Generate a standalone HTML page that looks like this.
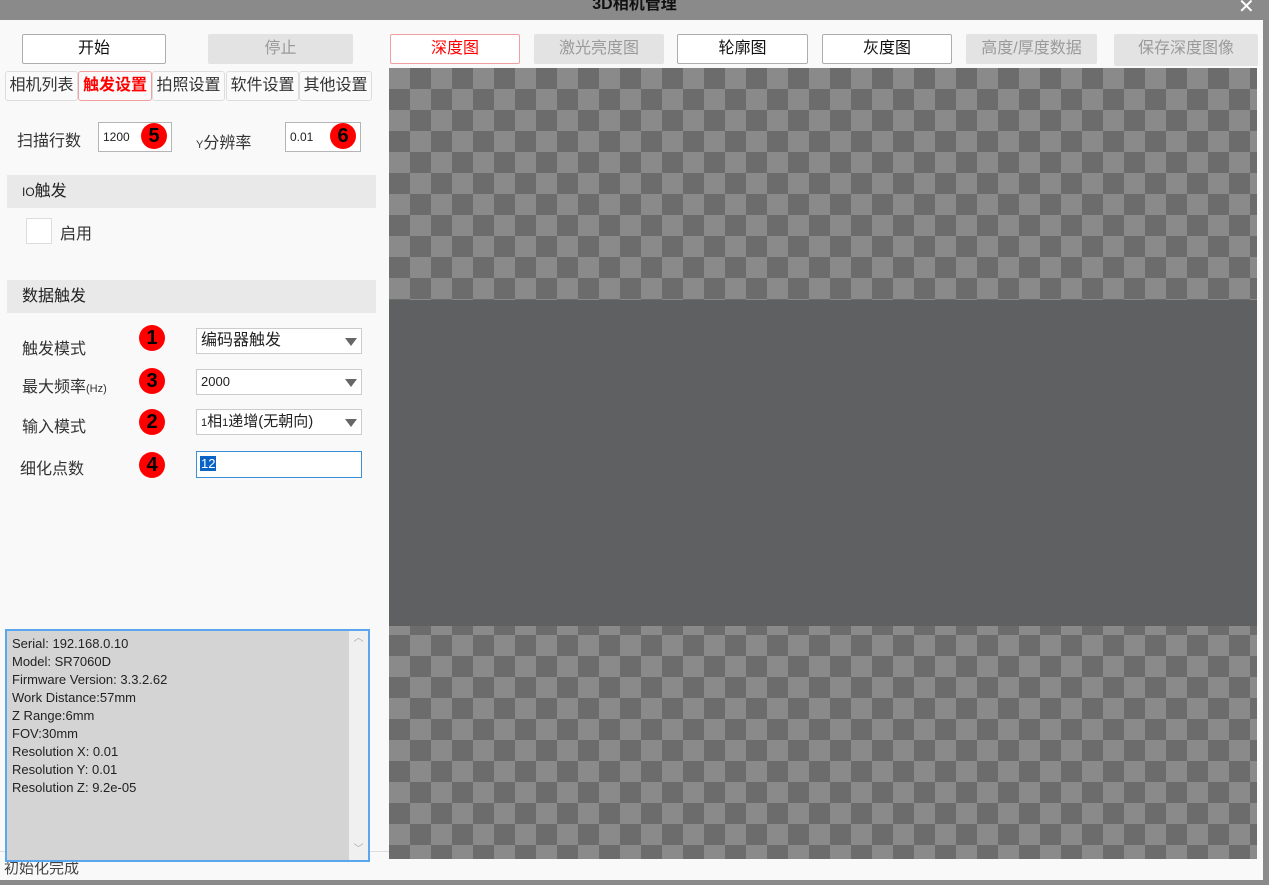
<!DOCTYPE html>
<html><head><meta charset="utf-8"><style>
*{margin:0;padding:0;box-sizing:border-box}
body{width:1269px;height:885px;position:relative;overflow:hidden;background:#8a8a8a;font-family:"Liberation Sans","Noto Sans CJK SC",sans-serif;font-size:15px;color:#222}
.a{position:absolute}
.win{position:absolute;left:0;top:20px;width:1263px;height:860px;background:#f9f9f9}
.btn{position:absolute;height:30px;border:1px solid #adadad;background:#fff;text-align:center;line-height:28px;font-size:16px;color:#111;border-radius:2px}
.dis{background:#e3e3e3;border-color:#e3e3e3;color:#9a9a9a}
.red{border-color:#f0a0a0;color:#f00}
.tab{position:absolute;top:71px;height:30px;border:1px solid #ddd;background:#fafafa;border-radius:3px;line-height:28px;font-size:16px;color:#333;text-align:center;white-space:nowrap;overflow:hidden}
.lbl{position:absolute;font-size:16px;color:#333}
.inp{position:absolute;background:#fff;border:1px solid #b5b5b5;font-size:12px;line-height:28px;padding-left:4px;height:30px}
.num{position:absolute;width:26px;height:26px;border-radius:50%;background:#f00;color:#000;font-size:20px;font-weight:bold;text-align:center;line-height:26px}
.sec{position:absolute;left:7px;width:369px;height:33px;background:#e9e9e9;line-height:33px;padding-left:15px;font-size:16px;color:#222}
.sel{position:absolute;left:196px;width:166px;height:26px;background:#fff;border:1px solid #ccc;line-height:24px;padding-left:4px;font-size:14px}
.sel:after{content:"";position:absolute;right:4px;top:9px;border-left:6px solid transparent;border-right:6px solid transparent;border-top:8px solid #666}
</style></head><body>
<div class="a" style="left:0;top:0;width:1269px;height:20px;text-align:center;font-weight:bold;font-size:16px;line-height:10px;color:#111">3D相机管理</div>
<div class="a" style="left:1238px;top:-6px;color:#fff;font-size:20px">✕</div>
<div class="win"></div>
<div class="btn" style="left:22px;top:34px;width:144px">开始</div>
<div class="btn dis" style="left:208px;top:34px;width:145px">停止</div>
<div class="btn red" style="left:390px;top:34px;width:130px">深度图</div>
<div class="btn dis" style="left:534px;top:34px;width:130px">激光亮度图</div>
<div class="btn" style="left:677px;top:34px;width:131px">轮廓图</div>
<div class="btn" style="left:822px;top:34px;width:130px">灰度图</div>
<div class="btn dis" style="left:966px;top:34px;width:131px">高度/厚度数据</div>
<div class="btn dis" style="left:1114px;top:34px;width:144px;height:32px">保存深度图像</div>
<div class="tab" style="left:5px;width:73px">相机列表</div>
<div class="tab" style="left:78px;width:74px;border-color:#f0a0a0;color:#f00;font-weight:bold">触发设置</div>
<div class="tab" style="left:152px;width:73px">拍照设置</div>
<div class="tab" style="left:226px;width:73px">软件设置</div>
<div class="tab" style="left:299px;width:73px">其他设置</div>
<div class="lbl" style="left:17px;top:127px">扫描行数</div>
<div class="inp" style="left:98px;top:122px;width:74px">1200</div>
<div class="num" style="left:141px;top:123px">5</div>
<div class="lbl" style="left:196px;top:129px"><span style="font-size:11px">Y</span>分辨率</div>
<div class="inp" style="left:285px;top:122px;width:76px">0.01</div>
<div class="num" style="left:330px;top:123px">6</div>
<div class="sec" style="top:175px;padding-left:15px"><span style="font-size:12px">IO</span>触发</div>
<div class="a" style="left:26px;top:218px;width:26px;height:26px;background:#fff;border:1px solid #ddd"></div>
<div class="lbl" style="left:60px;top:220px">启用</div>
<div class="sec" style="top:280px">数据触发</div>
<div class="lbl" style="left:22px;top:335px">触发模式</div>
<div class="num" style="left:139px;top:325px">1</div>
<div class="sel" style="left:196px;top:328px;font-size:16px">编码器触发</div>
<div class="lbl" style="left:22px;top:373px">最大频率<span style="font-size:11px">(Hz)</span></div>
<div class="num" style="left:139px;top:368px">3</div>
<div class="sel" style="top:369px;font-size:13px">2000</div>
<div class="lbl" style="left:22px;top:413px">输入模式</div>
<div class="num" style="left:139px;top:409px">2</div>
<div class="sel" style="top:409px;font-size:15px"><span style="font-size:11px">1</span>相<span style="font-size:11px">1</span>递增(无朝向)</div>
<div class="lbl" style="left:20px;top:455px">细化点数</div>
<div class="num" style="left:139px;top:452px">4</div>
<div class="a" style="left:196px;top:451px;width:166px;height:27px;background:#fff;border:1px solid #3b8fd8;padding:3px 3px"><span style="background:#0a64c8;color:#fff;font-size:13px;padding:0 1px">12</span></div>
<div class="a" style="left:0;top:851px;width:848px;height:29px;background:#f9f9f9;border-top:1px solid #ddd"></div>
<div class="a" style="left:4px;top:857px;font-size:15px;color:#444">初始化完成</div>
<div class="a" style="left:5px;top:629px;width:365px;height:233px;background:#d4d4d4;border:2px solid #5aa7f0;padding:4px 5px;font-size:13px;line-height:18px;color:#222">
Serial: 192.168.0.10<br>Model: SR7060D<br>Firmware Version: 3.3.2.62<br>Work Distance:57mm<br>Z Range:6mm<br>FOV:30mm<br>Resolution X: 0.01<br>Resolution Y: 0.01<br>Resolution Z: 9.2e-05
<div class="a" style="right:0;top:0;width:19px;height:229px;background:#f0f0f0;color:#aaa;font-size:10px;text-align:center;line-height:16px">︿<div style="position:absolute;bottom:2px;width:19px">﹀</div></div>
</div>
<div class="a" style="left:389px;top:68px;width:868px;height:791px;background-color:#8a8a8a;background-image:repeating-conic-gradient(#6c6c6c 0 25%,#8a8a8a 0 50%);background-size:42px 42px;background-position:0 0"></div>
<div class="a" style="left:389px;top:300px;width:868px;height:326px;background:#5f6062"></div>
</body></html>
